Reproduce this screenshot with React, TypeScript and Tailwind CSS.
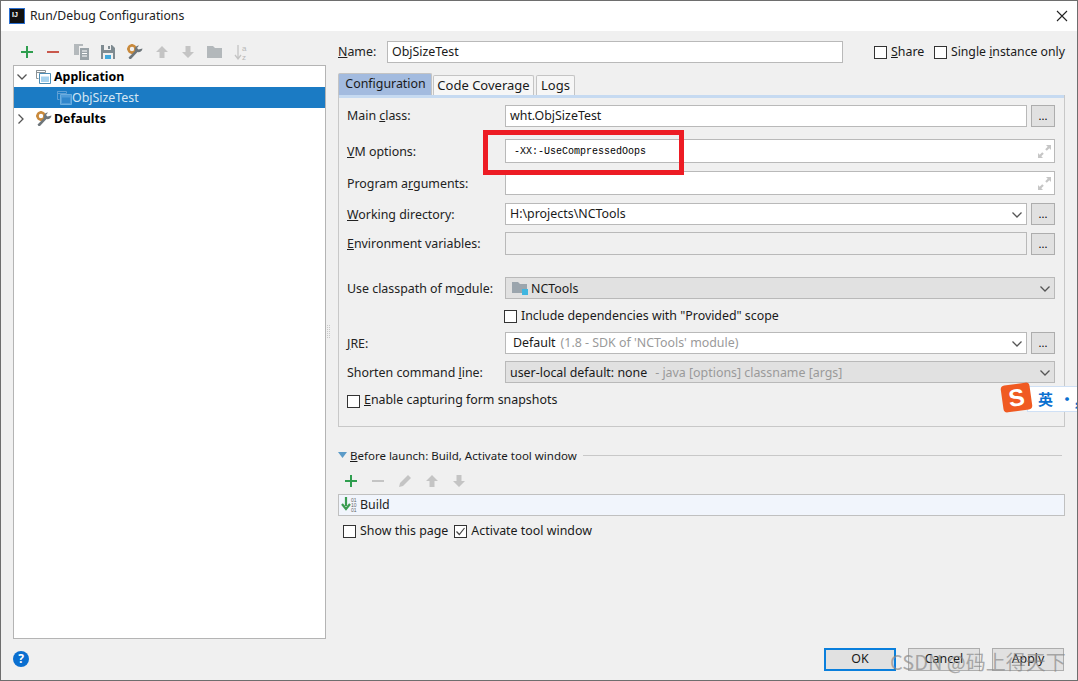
import type { ReactNode } from "react";

const Chevron = ({ className = "" }: { className?: string }) => (
  <svg width="12" height="8" viewBox="0 0 12 8" className={className}>
    <path d="M1.500 1.500 6 6l4.500-4.500" fill="none" stroke="#555" strokeWidth="1.300" />
  </svg>
);

const Plus = () => (
  <svg width="14" height="14" viewBox="0 0 14 14">
    <path d="M7 1v12M1 7h12" stroke="#2f9e4f" strokeWidth="2" />
  </svg>
);

const Minus = ({ color }: { color: string }) => (
  <svg width="14" height="14" viewBox="0 0 14 14">
    <path d="M1 7h12" stroke={color} strokeWidth="2" />
  </svg>
);

const ArrowUp = () => (
  <svg width="14" height="14" viewBox="0 0 14 14">
    <path d="M7 1 1 7h3.500v6h5V7H13z" fill="#c4c4c4" />
  </svg>
);

const ArrowDown = () => (
  <svg width="14" height="14" viewBox="0 0 14 14">
    <path d="M7 13 1 7h3.500V1h5v6H13z" fill="#c4c4c4" />
  </svg>
);

const CopyIcon = () => (
  <svg width="15" height="16" viewBox="0 0 15 16">
    <path d="M0 0h9v2H5v9H0z" fill="#b4b9bc" />
    <path d="M6 4h9v12H6z" fill="#9aa3a8" />
    <path d="M8 7h5M8 9.500h5M8 12h5" stroke="#fff" strokeWidth="1" />
  </svg>
);

const SaveIcon = () => (
  <svg width="14" height="14" viewBox="0 0 14 14">
    <path d="M0 0h11l3 3v11H0z" fill="#7f8b91" />
    <path d="M3 0h7v5H3z" fill="#f0f0f0" />
    <path d="M7 1h2v3H7z" fill="#7f8b91" />
    <path d="M2 8h10v6H2z" fill="#f0f0f0" />
    <path d="M4 10h6v4H4z" fill="#40a8dc" />
  </svg>
);

const WrenchGear = () => (
  <svg width="16" height="16" viewBox="0 0 16 16">
    <circle cx="5" cy="5" r="3.500" fill="none" stroke="#c98a3c" strokeWidth="2.600" />
    <path d="M5 0v2M5 8v2M0 5h2M8 5h2" stroke="#c98a3c" strokeWidth="1.600" />
    <path d="M15.500 4.500a4 4 0 0 1-5 3.500L4 15H2.500L1.500 13.500 8 7a4 4 0 0 1 4-5.500L10 4l1.500 1.500z" fill="#6e767b" />
  </svg>
);

const FolderIcon = () => (
  <svg width="15" height="12" viewBox="0 0 15 12">
    <path d="M0 0h6l2 2h7v10H0z" fill="#b3b8bb" />
  </svg>
);

const SortIcon = () => (
  <svg width="15" height="17" viewBox="0 0 15 17">
    <path d="M4 1v13M1 11l3 4 3-4" fill="none" stroke="#c4c4c4" strokeWidth="1.300" />
    <text x="8" y="7" fontSize="8" fill="#b8b8b8" fontFamily="Liberation Sans">a</text>
    <text x="8" y="16" fontSize="8" fill="#b8b8b8" fontFamily="Liberation Sans">z</text>
  </svg>
);

const AppIcon = ({ muted }: { muted?: boolean }) => (
  <svg width="15" height="14" viewBox="0 0 15 14">
    <path d="M.5.500h9v2h-9zM.5.500v8h2" fill="none" stroke={muted ? "#5f9fd4" : "#8a9296"} />
    <path d="M3.500 3.500h11v10h-11z" fill={muted ? "#4f9bd8" : "#fff"} stroke={muted ? "#6aaee0" : "#4d8db5"} />
    <path d="M5 6.500h8v5.500H5z" fill={muted ? "#2f86cc" : "#a6d2ee"} />
  </svg>
);

const ExpandIcon = () => (
  <svg width="13" height="13" viewBox="0 0 13 13" className="absolute right-[3px] top-[5px]">
    <path d="M8 0h5v5L11.300 3.300 8.800 5.800 7.200 4.200 9.700 1.700z" fill="#c6c6c6" />
    <path d="M5 13H0V8l1.700 1.700 2.500-2.500 1.600 1.600-2.500 2.500z" fill="#c6c6c6" />
  </svg>
);

const Check = ({ checked }: { checked?: boolean }) => (
  <span className="w-[13px] h-[13px] border border-[#333333] bg-white shrink-0 flex items-center justify-center">
    {checked && (
      <svg width="11" height="11" viewBox="0 0 11 11">
        <path d="M1.500 5.500 4.300 8.500 9.500 2" fill="none" stroke="#444" strokeWidth="1.200" />
      </svg>
    )}
  </span>
);

const Dots = () => (
  <button className="w-[24px] h-[22px] shrink-0 ml-[4px] border border-[#adadad] bg-[#e1e1e1] text-[11px] leading-[20px] text-black">
    ...
  </button>
);

const Label = ({ children, className = "" }: { children: ReactNode; className?: string }) => (
  <span className={`w-[158px] shrink-0 text-[#222222] ${className}`}>{children}</span>
);

const Field = ({
  children,
  className = "",
  arrow,
  expand,
}: {
  children?: ReactNode;
  className?: string;
  arrow?: boolean;
  expand?: boolean;
}) => (
  <div className={`relative flex-1 flex items-center border border-[#b9b9b9] px-[4px] min-w-0 ${className}`}>
    {children}
    {arrow && <Chevron className="absolute right-[3px] top-[7px]" />}
    {expand && <ExpandIcon />}
  </div>
);

export default function App() {
  return (
    <div className="relative w-[1078px] h-[681px] flex flex-col overflow-hidden border border-[#6e6e6e] bg-[#f0f0f0] text-[12.400px] leading-[18px] text-[#1a1a1a] font-['Noto_Sans','Liberation_Sans',sans-serif]">
      {/* title bar */}
      <div className="h-[30px] shrink-0 bg-white flex items-center pl-[8px] pr-[9px]">
        <div className="w-[16px] h-[16px] bg-[#111111] border border-[#2a6fd0] text-white text-[7px] leading-[9px] font-bold pl-[2px] pt-[1px] font-['Liberation_Sans',sans-serif]">
          IJ
        </div>
        <span className="ml-[5px] text-[12.250px] text-[#222222]">Run/Debug Configurations</span>
        <svg width="12" height="12" viewBox="0 0 12 12" className="ml-auto">
          <path d="M1 1l10 10M11 1 1 11" stroke="#222" strokeWidth="1.100" />
        </svg>
      </div>

      <div className="flex flex-1 min-h-0">
        {/* left side */}
        <div className="w-[313px] ml-[12px] shrink-0 flex flex-col">
          <div className="h-[34px] shrink-0 flex items-center gap-[12px] pl-[7px] pt-[8px]">
            <Plus />
            <Minus color="#c9584c" />
            <span className="ml-[2px] flex"><CopyIcon /></span>
            <SaveIcon />
            <WrenchGear />
            <ArrowUp />
            <ArrowDown />
            <FolderIcon />
            <SortIcon />
          </div>
          <div className="flex-1 bg-white border border-[#b4b4b4]">
            <div className="h-[21px] flex items-center font-bold text-black">
              <Chevron className="ml-[2px]" />
              <span className="ml-[8px] flex"><AppIcon /></span>
              <span className="ml-[3px]">Application</span>
            </div>
            <div className="h-[21px] flex items-center bg-[#1b7bc4] text-[#d5e6f3] pl-[43px]">
              <AppIcon muted />
              <span>ObjSizeTest</span>
            </div>
            <div className="h-[21px] flex items-center font-bold text-black">
              <Chevron className="ml-[1px] -rotate-90" />
              <span className="ml-[9px] flex"><WrenchGear /></span>
              <span className="ml-[2px]">Defaults</span>
            </div>
          </div>
        </div>

        {/* splitter */}
        <div className="w-[12px] shrink-0 flex items-center justify-center">
          <span className="w-[3px] h-[13px] border-x border-dotted border-[#c8c8c8] mb-[8px] -ml-[8px]" />
        </div>

        {/* right side */}
        <div className="w-[727px] shrink-0 pt-[10px]">
          <div className="flex items-center h-[22px]">
            <span className="w-[49px] shrink-0 text-[#222222]"><u>N</u>ame:</span>
            <Field className="bg-white flex-none w-[456px] h-[22px]">ObjSizeTest</Field>
            <span className="ml-[31px]"><Check /></span>
            <span className="ml-[4px] w-[43px]"><u>S</u>hare</span>
            <Check />
            <span className="ml-[4px] whitespace-nowrap text-[12.250px]">Single <u>i</u>nstance only</span>
          </div>

          <div className="flex h-[22px] mt-[10px] items-end">
            <div className="w-[94px] h-[22px] bg-[#a3bbdf] border border-[#c4c4c4] border-b-0 rounded-t-[2px] text-center leading-[20px] pl-[1px]">Configuration</div>
            <div className="w-[101px] h-[20px] ml-[1px] bg-[#f6f6f6] border border-[#c4c4c4] border-b-0 rounded-t-[2px] text-center text-[13px]">Code Coverage</div>
            <div className="w-[39px] h-[20px] ml-[2px] bg-[#f6f6f6] border border-[#c4c4c4] border-b-0 rounded-t-[2px] text-center text-[13px]">Logs</div>
          </div>

          <div className="h-[332px] border border-t-0 border-[#c8c8c8] flex flex-col">
            <div className="h-[3px] shrink-0 bg-[#c6daf1]" />
            <div className="pl-[8px] pr-[9px] flex flex-col">
              <div className="flex items-center h-[22px] mt-[7px]">
                <Label>Main <u>c</u>lass:</Label>
                <Field className="bg-white h-[22px]">wht.ObjSizeTest</Field>
                <Dots />
              </div>
              <div className="flex items-center h-[24px] mt-[12px]">
                <Label className="pt-[2px]"><u>V</u>M options:</Label>
                <Field expand className="bg-white h-[24px] pl-[8px] pt-[1px] text-[10px] text-black font-['Liberation_Mono',monospace]">-XX:-UseCompressedOops</Field>
              </div>
              <div className="flex items-center h-[24px] mt-[8px]">
                <Label className="pt-[2px]">Program a<u>r</u>guments:</Label>
                <Field expand className="bg-white h-[24px]" />
              </div>
              <div className="flex items-center h-[22px] mt-[8px]">
                <Label className="pt-[2px]"><u>W</u>orking directory:</Label>
                <Field arrow className="bg-white h-[22px]">H:\projects\NCTools</Field>
                <Dots />
              </div>
              <div className="flex items-center h-[23px] mt-[7px]">
                <Label><u>E</u>nvironment variables:</Label>
                <Field className="h-[23px]" />
                <Dots />
              </div>
              <div className="flex items-center h-[22px] mt-[22px]">
                <Label className="pt-[2px]">Use classpath of m<u>o</u>dule:</Label>
                <Field arrow className="bg-[#e1e1e1] h-[22px] border-[#adadad]">
                  <svg width="16" height="13" viewBox="0 0 16 13" className="ml-[2px] mr-[3px] shrink-0">
                    <path d="M0 0h6l2 2h7v9H0z" fill="#9ba5ad" />
                    <path d="M10 7h6v6h-6z" fill="#40b6e0" />
                  </svg>
                  <span className="pt-[2px]">NCTools</span>
                </Field>
              </div>
              <div className="flex items-center h-[14px] mt-[10px] pl-[157px]">
                <Check />
                <span className="ml-[4px] whitespace-nowrap">Include dependencies with "Provided" scope</span>
              </div>
              <div className="flex items-center h-[22px] mt-[9px]">
                <Label className="pt-[2px]"><u>J</u>RE:</Label>
                <Field arrow className="bg-white h-[22px] pl-[7px] whitespace-nowrap">
                  Default<span className="ml-[5px] text-[#9a9a9a]">(1.8 - SDK of 'NCTools' module)</span>
                </Field>
                <Dots />
              </div>
              <div className="flex items-center h-[22px] mt-[7px]">
                <Label className="pt-[2px]">Shorten command <u>l</u>ine:</Label>
                <Field arrow className="bg-[#e1e1e1] h-[22px] border-[#adadad] whitespace-nowrap pt-[2px]">
                  user-local default: none<span className="ml-[8px] text-[#9a9a9a]">- java [options] classname [args]</span>
                </Field>
              </div>
              <div className="flex items-center h-[14px] mt-[11px]">
                <Check />
                <span className="ml-[4px] pb-[2px]"><u>E</u>nable capturing form snapshots</span>
              </div>
            </div>
          </div>

          {/* before launch */}
          <div className="flex items-center h-[14px] mt-[21px] text-[11.500px] pr-[3px]">
            <svg width="9" height="6" viewBox="0 0 9 6" className="shrink-0">
              <path d="M0 0h9L4.500 6z" fill="#5b9bc8" />
            </svg>
            <span className="ml-[3px] pt-[2px] whitespace-nowrap"><u>B</u>efore launch: Build, Activate tool window</span>
            <span className="flex-1 h-px bg-[#c8c8c8] ml-[6px]" />
          </div>
          <div className="flex items-center h-[16px] mt-[11px] pl-[6px] gap-[13px]">
            <Plus />
            <Minus color="#c4c4c4" />
            <svg width="14" height="14" viewBox="0 0 14 14">
              <path d="M10 1l3 3-8 8-4 1 1-4z" fill="#c4c4c4" />
            </svg>
            <ArrowUp />
            <ArrowDown />
          </div>
          <div className="h-[22px] mt-[5px] bg-[#f1f5fc] border border-[#c0c0c0] flex items-center pl-[2px] text-[#222222]">
            <svg width="18" height="16" viewBox="0 0 18 16" className="shrink-0">
              <path d="M5 0v9M1 7l4 5 4-5" fill="none" stroke="#3a9c50" strokeWidth="2.200" />
              <text x="10" y="5" fontSize="5" fill="#666" fontFamily="Liberation Sans">01</text>
              <text x="10" y="10" fontSize="5" fill="#666" fontFamily="Liberation Sans">10</text>
              <text x="10" y="15" fontSize="5" fill="#666" fontFamily="Liberation Sans">01</text>
            </svg>
            <span className="ml-[1px]">Build</span>
          </div>
          <div className="flex items-center h-[14px] mt-[8px] pl-[5px]">
            <Check />
            <span className="ml-[4px]">Show this page</span>
            <span className="ml-[6px]"><Check checked /></span>
            <span className="ml-[4px]">Activate tool window</span>
          </div>
        </div>
      </div>

      {/* footer */}
      <div className="h-[41px] shrink-0 flex items-start pt-[9px] pl-[12px] pr-[13px]">
        <div className="w-[16px] h-[16px] mt-[3px] rounded-full bg-[#0a6fd0] text-white text-[12px] leading-[16px] font-bold text-center">?</div>
        <div className="ml-auto flex gap-[12px]">
          <button className="w-[72px] h-[23px] border-2 border-[#0a7fdc] bg-[#e1e1e1] leading-[15px] pb-[3px]">OK</button>
          <button className="w-[72px] h-[23px] border border-[#adadad] bg-[#e1e1e1] pb-[2px]">Cancel</button>
          <button className="w-[72px] h-[23px] border border-[#adadad] bg-[#e1e1e1] pb-[2px]">Apply</button>
        </div>
      </div>

      {/* screenshot annotations */}
      <div className="absolute left-[482px] top-[129px] w-[201px] h-[45px] border-[5px] border-[#ed1c24]" />
      <div className="absolute left-[1001px] top-[381px] w-[76px] h-[30px] flex items-center">
        <div className="absolute left-[25px] top-[4px] w-[52px] h-[26px] bg-white border border-[#cfe0f5] border-r-0 font-bold text-[15px] leading-[24px] text-[#0a6fd0] pl-[10px] whitespace-nowrap font-['Noto_Sans_CJK_SC',sans-serif]">
          英 <span className="ml-[3px]">•,</span>
        </div>
        <div className="relative w-[29px] h-[27px] bg-[#f05a22] rounded-[4px] -rotate-[8deg] text-white font-bold text-[24px] leading-[27px] text-center font-['Liberation_Sans',sans-serif]">
          S
        </div>
      </div>
      <div className="absolute left-[889px] top-[648px] text-[20px] leading-[26px] text-[#8a8a8a]/70 whitespace-nowrap font-['Noto_Sans_CJK_SC',sans-serif]">
        CSDN @码上得天下
      </div>
    </div>
  );
}
